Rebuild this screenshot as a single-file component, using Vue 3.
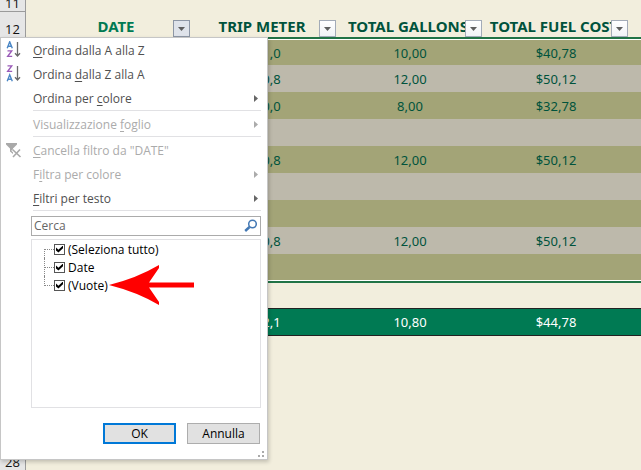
<script setup>
import { ref } from 'vue'

const columns = ['DATE', 'TRIP METER', 'TOTAL GALLONS', 'TOTAL FUEL COST']

const rows = [
  ['301,0', '10,00', '$40,78'],
  ['300,8', '12,00', '$50,12'],
  ['300,0', '8,00', '$32,78'],
  ['', '', ''],
  ['300,8', '12,00', '$50,12'],
  ['', '', ''],
  ['', '', ''],
  ['300,8', '12,00', '$50,12'],
  ['', '', ''],
]

const totals = ['302,1', '10,80', '$44,78']

const groups = [
  [
    { pre: '', key: 'O', post: 'rdina dalla A alla Z', icon: 'az' },
    { pre: 'Ordina ', key: 'd', post: 'alla Z alla A', icon: 'za' },
    { pre: 'Ordina per ', key: 'c', post: 'olore', sub: true },
  ],
  [{ pre: 'Visualizzazione ', key: 'f', post: 'oglio', sub: true, off: true }],
  [
    { pre: '', key: 'C', post: 'ancella filtro da "DATE"', icon: 'clear', off: true },
    { pre: 'F', key: 'i', post: 'ltra per colore', sub: true, off: true },
    { pre: '', key: 'F', post: 'iltri per testo', sub: true },
  ],
]

const search = ref('')
const choices = ref([
  { id: 'all', label: '(Seleziona tutto)', checked: true },
  { id: 'date', label: 'Date', checked: true },
  { id: 'empty', label: '(Vuote)', checked: true, marked: true },
])
</script>

<template>
  <main class="sheet">
    <table class="grid">
      <colgroup>
        <col class="c-num" />
        <col class="c-gap" />
        <col v-for="c in columns" :key="c" class="c-data" />
        <col />
      </colgroup>
      <thead>
        <tr class="r-top">
          <th class="num" scope="row"><span>11</span></th>
          <td colspan="6"></td>
        </tr>
        <tr class="r-head">
          <th class="num" scope="row">12</th>
          <td></td>
          <th v-for="(c, i) in columns" :key="c" class="head" :class="{ first: i === 0 }" scope="col">
            {{ c }}
            <button class="drop" :class="{ open: i === 0 }" type="button" :aria-label="'Filtro ' + c">
              <svg width="7" height="4" viewBox="0 0 7 4"><path d="M0 0h7L3.500 4z" fill="#5f5f5f" /></svg>
            </button>
          </th>
          <td></td>
        </tr>
      </thead>
      <tbody>
        <tr class="r-line"><th class="num"></th><td colspan="6"></td></tr>
        <tr v-for="(r, i) in rows" :key="i" class="r-data" :class="{ alt: i % 2 }">
          <th class="num"></th>
          <td></td>
          <td></td>
          <td v-for="(v, j) in r" :key="j">{{ v }}</td>
          <td></td>
        </tr>
        <tr class="r-line end"><th class="num"></th><td colspan="6"></td></tr>
        <tr class="r-space"><th class="num"></th><td colspan="6"></td></tr>
      </tbody>
      <tfoot>
        <tr class="r-total">
          <th class="num"></th>
          <td></td>
          <td></td>
          <td v-for="(v, j) in totals" :key="j">{{ v }}</td>
          <td></td>
        </tr>
        <tr class="r-rest"><th class="num"></th><td colspan="6"></td></tr>
        <tr class="r-last"><th class="num" scope="row">28</th><td colspan="6"></td></tr>
      </tfoot>
    </table>

    <section class="popup" aria-label="Filtro">
      <div v-for="(g, gi) in groups" :key="gi" class="group">
        <button v-for="m in g" :key="m.post" class="item" type="button" :disabled="m.off">
          <span class="icon">
            <svg v-if="m.icon === 'az' || m.icon === 'za'" width="16" height="18" viewBox="0 0 16 18" fill="none">
              <g :transform="m.icon === 'az' ? 'translate(0 0)' : 'translate(0 9)'" stroke="#4a86c5" stroke-width="1.400">
                <path d="M1.200 7.200L3.700 .8L6.300 7.200M2 5.200h3.500" />
              </g>
              <g :transform="m.icon === 'az' ? 'translate(0 9)' : 'translate(0 0)'" stroke="#9a5bb8" stroke-width="1.400">
                <path d="M1.500 .9h4.200L1.700 6.400H6.200" />
              </g>
              <path d="M11.500 1v14M9 12.300l2.500 2.700L14 12.300" stroke="#6a6a6a" stroke-width="1.300" />
            </svg>
            <svg v-else-if="m.icon === 'clear'" width="16" height="18" viewBox="0 0 16 18">
              <path d="M0 2h11v1.500L7 7.500V13L4 10.500v-3L0 3.500z" fill="#a9a9a9" />
              <path d="M6.500 8.500L14.500 16M14 8.500L7 16" stroke="#fff" stroke-width="3.500" />
              <path d="M6.500 8.500L14.500 16M14 8.500L7 16" stroke="#a9a9a9" stroke-width="1.600" />
            </svg>
          </span>
          <span class="label">{{ m.pre }}<u>{{ m.key }}</u>{{ m.post }}</span>
          <svg v-if="m.sub" class="more" width="4" height="7" viewBox="0 0 4 7"><path d="M0 0l4 3.500L0 7z" fill="currentColor" /></svg>
        </button>
      </div>

      <div class="body">
        <div class="search">
          <input v-model="search" type="text" placeholder="Cerca" aria-label="Cerca" />
          <svg width="14" height="14" viewBox="0 0 14 14" fill="none" stroke="#4378b4">
            <circle cx="8.500" cy="5" r="3.800" stroke-width="1.500" />
            <path d="M5.500 8L1.200 12" stroke-width="2.400" />
          </svg>
        </div>

        <ul class="list">
          <li v-for="c in choices" :key="c.id">
            <input :id="c.id" v-model="c.checked" type="checkbox" />
            <label :for="c.id">{{ c.label }}</label>
            <svg v-if="c.marked" class="arrow" width="86" height="42" viewBox="0 0 86 42">
              <path d="M0 21Q28 14 50 1V4L40 18.500H85V23.500H40L50 38V41Q28 28 0 21z" fill="#f00" />
            </svg>
          </li>
        </ul>

        <div class="actions">
          <button class="btn primary" type="button">OK</button>
          <button class="btn" type="button">Annulla</button>
        </div>
      </div>
      <i class="grip"></i>
    </section>
  </main>
</template>

<style>
body {
  background: #f2eedd;
}
</style>

<style scoped>
.sheet {
  position: relative;
  min-height: 100vh;
  overflow: hidden;
  background: #f2eedd;
  font-family: "Noto Sans", "Open Sans", sans-serif;
  color: #00533c;
}
.grid {
  width: 100%;
  table-layout: fixed;
  border-collapse: separate;
  border-spacing: 0;
  font-size: 13px;
  line-height: 16px;
}
.c-num { width: 26px; }
.c-gap { width: 18px; }
.c-data { width: 146px; }
td, th {
  box-sizing: border-box;
  padding: 0;
  text-align: center;
  white-space: nowrap;
}
.num {
  border-right: 1px solid #9b9b9b;
  background: #e6e6e6;
  color: #111;
  font-family: "Open Sans", "Noto Sans", sans-serif;
  font-size: 13px;
  font-weight: 400;
}
.r-top th {
  height: 12px;
  border-bottom: 1px solid #9b9b9b;
}
.r-top span {
  display: flex;
  height: 11px;
  justify-content: center;
  align-items: flex-end;
}
.r-head th { height: 25px; }
.head {
  position: relative;
  font-size: 15px;
  font-weight: 700;
  line-height: 20px;
  padding: 3px 2px 0 0;
}
.head.first { color: #007a53; }
.r-head .num { padding-top: 8px; }
.drop {
  position: absolute;
  right: 0;
  bottom: 0;
  display: flex;
  align-items: center;
  justify-content: center;
  width: 17px;
  height: 17px;
  padding: 0;
  border: 1px solid #a3abb8;
  background: linear-gradient(#fff, #f1f3f7);
}
.drop.open {
  border-color: #8d96a5;
  background: #dfe3ea;
}
.r-line td {
  height: 3px;
  border-top: 2px solid #217346;
  background: #fff;
}
.r-line.end td {
  border-top: 0;
  border-bottom: 2px solid #217346;
}
.r-data td {
  height: 27px;
  background: #a3a477;
}
.r-data:nth-child(2) td { height: 25px; }
.r-data:nth-child(10) td { height: 26px; }
.r-data.alt td { background: #bdb9ab; }
.r-data td:nth-child(n + 4),
.r-total td:nth-child(n + 4) { padding-left: 2px; }
.r-space td { height: 25px; }
.r-total td {
  height: 28px;
  border-top: 1px solid #222;
  border-bottom: 1px solid #222;
  background: #007a53;
  color: #fff;
}
.r-rest td { height: 114px; }
.r-last th { height: 24px; }

.popup {
  position: absolute;
  top: 37px;
  left: 0;
  box-sizing: border-box;
  width: 268px;
  padding-bottom: 15px;
  border: 1px solid #c6c6c6;
  background: #fff;
  box-shadow: 1px 2px 4px rgba(0, 0, 0, 0.2);
  font-family: "Open Sans", "Noto Sans", sans-serif;
  font-size: 12px;
  color: #444;
}
.group {
  display: flex;
  flex-direction: column;
}
.group::after {
  content: "";
  height: 1px;
  margin: 0 6px 1px 32px;
  background: #e1e1e4;
}
.item {
  display: flex;
  align-items: center;
  height: 24px;
  padding: 0 9px 0 5px;
  border: 0;
  background: none;
  color: #505050;
  font: inherit;
  text-align: left;
}
.item:disabled { color: #ababab; }
.icon {
  display: flex;
  width: 27px;
}
.label { flex: 1; }
u { text-underline-offset: 2px; }
.more { color: #666; }
.item:disabled .more { color: #ababab; }

.body { padding: 4px 6px 0 30px; }
.search {
  display: flex;
  align-items: center;
  box-sizing: border-box;
  height: 20px;
  padding: 0 2px;
  border: 1px solid #ababab;
}
.search input {
  flex: 1;
  min-width: 0;
  padding: 0;
  border: 0;
  outline: 0;
  background: none;
  color: #444;
  font: inherit;
  line-height: 16px;
}
.search input::placeholder { color: #666; }
.list {
  box-sizing: border-box;
  height: 169px;
  margin: 3px 0 15px;
  padding: 0 0 0 12px;
  border: 1px solid #e1e1e4;
  list-style: none;
  color: #000;
}
.list li {
  position: relative;
  display: flex;
  align-items: center;
  height: 18px;
}
.list li::before {
  content: "";
  align-self: flex-end;
  box-sizing: border-box;
  width: 10px;
  height: 9px;
  border-top: 1px dotted #888;
  border-left: 1px dotted #888;
}
.list li:not(:first-child)::before {
  align-self: flex-start;
  height: 10px;
  border-top: 0;
  border-bottom: 1px dotted #888;
}
.list li:nth-child(2)::after {
  content: "";
  position: absolute;
  left: 0;
  top: 9px;
  height: 9px;
  border-left: 1px dotted #888;
}
.list input {
  display: grid;
  place-items: center;
  appearance: none;
  box-sizing: border-box;
  width: 11px;
  height: 11px;
  margin: 0 3px 0 0;
  border: 1px solid #555;
  background: #fff;
}
.list input:checked::before {
  content: "";
  width: 7px;
  height: 7px;
  background: #000;
  clip-path: polygon(0 30%, 35% 60%, 100% 0, 100% 40%, 35% 100%, 0 70%);
}
.arrow {
  position: absolute;
  left: 65px;
  top: -12px;
}
.actions {
  display: flex;
  justify-content: flex-end;
  gap: 11px;
  padding-right: 1px;
}
.btn {
  box-sizing: border-box;
  width: 73px;
  height: 21px;
  padding: 0;
  border: 1px solid #adadad;
  background: #e1e1e1;
  color: #000;
  font: inherit;
  line-height: 16px;
}
.btn.primary { border: 2px solid #0078d7; }
.grip {
  position: absolute;
  right: 3px;
  bottom: 2px;
  width: 2px;
  height: 2px;
  background: #aaa;
  box-shadow: 0 -4px #aaa, -4px 0 #aaa;
}
</style>
